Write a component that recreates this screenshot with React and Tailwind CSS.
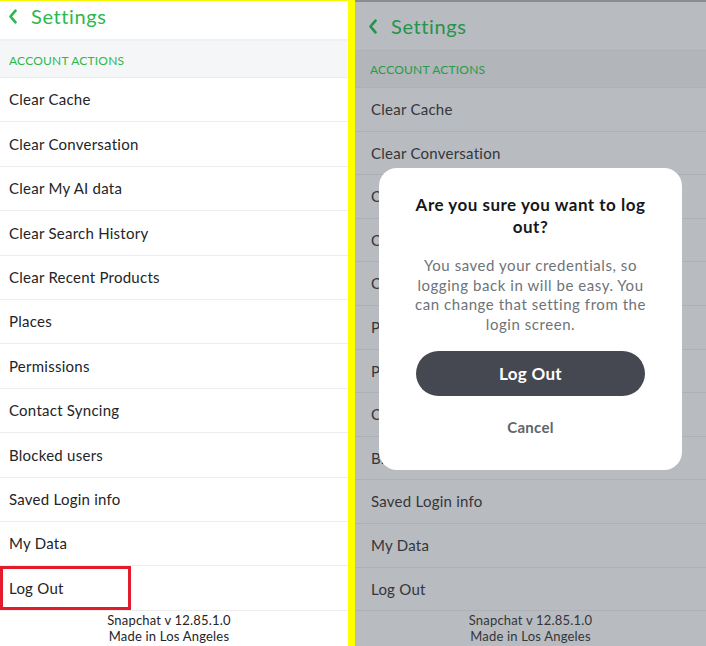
import React from "react";

const items = [
  "Clear Cache",
  "Clear Conversation",
  "Clear My AI data",
  "Clear Search History",
  "Clear Recent Products",
  "Places",
  "Permissions",
  "Contact Syncing",
  "Blocked users",
  "Saved Login info",
  "My Data",
  "Log Out",
];

function Chevron({ className }) {
  return (
    <svg viewBox="0 0 12 18" className={className} fill="none">
      <path d="M9 2 L3 9 L9 16" stroke="currentColor" strokeWidth="3.2" strokeLinecap="round" strokeLinejoin="round" />
    </svg>
  );
}

function LeftPanel() {
  return (
    <div className="w-[348px] h-full bg-white flex flex-col border-t border-[#f5f500]">
      <div className="h-[40px] flex items-start pt-[4px] pl-[8px] gap-[13px] border-b-2 border-[#eef0f1]">
        <Chevron className="w-[10px] h-[15px] mt-[4px] text-[#2db84c]" />
        <span className="text-[20px] text-[#2db84c] leading-[22px] tracking-[0.6px]">Settings</span>
      </div>
      <div className="h-[36px] bg-[#f5f6f7] flex items-center pl-[9px] pt-[3px] text-[12px] tracking-[0.2px] text-[#2db84c]">
        ACCOUNT ACTIONS
      </div>
      {items.map((t, i) => (
        <div
          key={t}
          className="h-[44.4px] flex items-center border-t border-[#ececee] text-[15px] tracking-[0.25px] text-[#232428]"
        >
          {i === items.length - 1 ? (
            <div className="h-[44px] w-[131px] flex items-center pl-[6px] border-[3px] border-[#e31c2b]">
              {t}
            </div>
          ) : (
            <span className="pl-[9px]">{t}</span>
          )}
        </div>
      ))}
      <div className="flex-1 border-t border-[#ececee] flex flex-col items-center pt-[1px] pr-[10px] text-[13px] leading-[16px] tracking-[0.2px] text-[#232428]">
        <span>Snapchat v 12.85.1.0</span>
        <span>Made in Los Angeles</span>
      </div>
    </div>
  );
}

function RightPanel() {
  return (
    <div className="relative flex-1 h-full bg-[#b8bbbf] flex flex-col border-t-2 border-[#8a8d91]">
      <div className="h-[49px] flex items-center pl-[13px] gap-[13px] border-b border-[#aeb1b5]">
        <Chevron className="w-[10px] h-[15px] text-[#24944a]" />
        <span className="text-[20px] text-[#24944a] leading-none tracking-[0.6px]">Settings</span>
      </div>
      <div className="h-[36px] bg-[#b2b5b9] flex items-center pl-[15px] pt-[2px] text-[12px] tracking-[0.2px] text-[#279a4b]">
        ACCOUNT ACTIONS
      </div>
      {items.map((t) => (
        <div
          key={t}
          className="h-[43.6px] flex items-center pl-[16px] border-t border-[#adb0b4] text-[15px] tracking-[0.25px] text-[#34363a]"
        >
          {t}
        </div>
      ))}
      <div className="flex-1 border-t border-[#adb0b4] flex flex-col items-center pt-[1px] text-[13px] leading-[16px] tracking-[0.2px] text-[#34363a]">
        <span>Snapchat v 12.85.1.0</span>
        <span>Made in Los Angeles</span>
      </div>

      <div className="absolute left-[24px] top-[166px] w-[303px] h-[302px] bg-white rounded-[18px] flex flex-col items-center pt-[26px]">
        <div className="text-[17px] font-bold leading-[22px] tracking-[0.5px] text-[#16171a] text-center w-[245px]">
          Are you sure you want to log out?
        </div>
        <div className="mt-[18px] text-[15px] leading-[19.5px] tracking-[0.55px] text-[#6e7378] text-center w-[240px]">
          You saved your credentials, so logging back in will be easy. You can change that setting from the login screen.
        </div>
        <div className="mt-[17px] w-[229px] h-[45px] rounded-full bg-[#454850] flex items-center justify-center text-[17px] font-bold tracking-[0.3px] text-white">
          Log Out
        </div>
        <div className="mt-[20px] text-[15px] font-bold tracking-[0.3px] text-[#5f646b]">Cancel</div>
      </div>
    </div>
  );
}

export default function App() {
  return (
    <div
      className="w-[706px] h-[646px] flex overflow-hidden"
      style={{ fontFamily: "Lato, 'Noto Sans', sans-serif" }}
    >
      <LeftPanel />
      <div className="w-[7px] h-full bg-[#ffff00]" />
      <RightPanel />
    </div>
  );
}
